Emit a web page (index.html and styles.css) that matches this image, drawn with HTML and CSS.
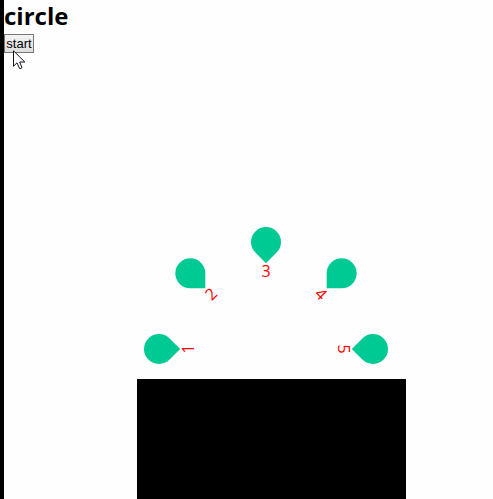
FILE: index.html
```html
<!DOCTYPE html>
<html lang="en">
<head>
<meta charset="utf-8">
<title>circle</title>
<link rel="stylesheet" href="styles.css">
</head>
<body>
<header class="header">
  <h1 class="title">circle</h1>
  <button class="start" type="button">start</button>
  <svg class="cursor" width="13" height="20" viewBox="0 0 13 20" aria-hidden="true">
    <path d="M.5 .8V16.2L4 12.8L6.5 18.4Q8 19 9 17.6L6.7 12H11.8Z" fill="#fff" stroke="#111122"/>
  </svg>
</header>
<main class="scene">
  <ol class="fan">
    <li class="pin pin-1"><span class="drop"></span><span class="number">1</span></li>
    <li class="pin pin-2"><span class="drop"></span><span class="number">2</span></li>
    <li class="pin pin-3"><span class="drop"></span><span class="number">3</span></li>
    <li class="pin pin-4"><span class="drop"></span><span class="number">4</span></li>
    <li class="pin pin-5"><span class="drop"></span><span class="number">5</span></li>
  </ol>
  <div class="base"></div>
</main>
</body>
</html>
```
FILE: styles.css
```css
* {
  box-sizing: border-box;
}

body {
  display: flex;
  flex-direction: column;
  min-height: 100vh;
  margin: 0;
  border-left: 4px solid #000;
  background: #fefefe;
  font-family: "Open Sans", "Noto Sans", sans-serif;
  font-size: 16px;
}

.header {
  position: relative;
  display: flex;
  flex-direction: column;
  align-items: flex-start;
  gap: 2px;
}

.title {
  margin: 0;
  font-size: 24px;
  line-height: 32px;
  font-weight: 700;
}

.start {
  min-width: 30px;
  padding: 0 1px;
  border: 1px solid #767676;
  border-radius: 0;
  background: linear-gradient(#f4f4f4, #dddddd);
  color: #000;
  font: 13px/17px "Liberation Sans", Arial, sans-serif;
}

.cursor {
  position: absolute;
  top: 50px;
  left: 9px;
}

.scene {
  width: 55%;
  margin-top: auto;
  margin-left: 27.2%;
}

.fan {
  display: grid;
  justify-content: center;
  height: 152px;
  margin: 0;
  padding: 0 11px 0 0;
  list-style: none;
}

/* Pins share one cell and fan out around a common centre below them. */
.pin {
  grid-area: 1 / 1;
  display: flex;
  flex-direction: column;
  align-items: center;
  gap: 4px;
  width: 30px;
  transform-origin: 15px 122px;
}

.pin-1 { transform: rotate(-90deg); }
.pin-2 { transform: rotate(-45deg); }
.pin-4 { transform: rotate(45deg); }
.pin-5 { transform: rotate(90deg); }

.drop {
  width: 30px;
  height: 30px;
  border-radius: 50% 50% 0;
  background: #00ca93;
  transform: rotate(45deg);
}

.number {
  color: #f00;
  line-height: 20px;
}

.base {
  height: 120px;
  background: #000;
}
```
